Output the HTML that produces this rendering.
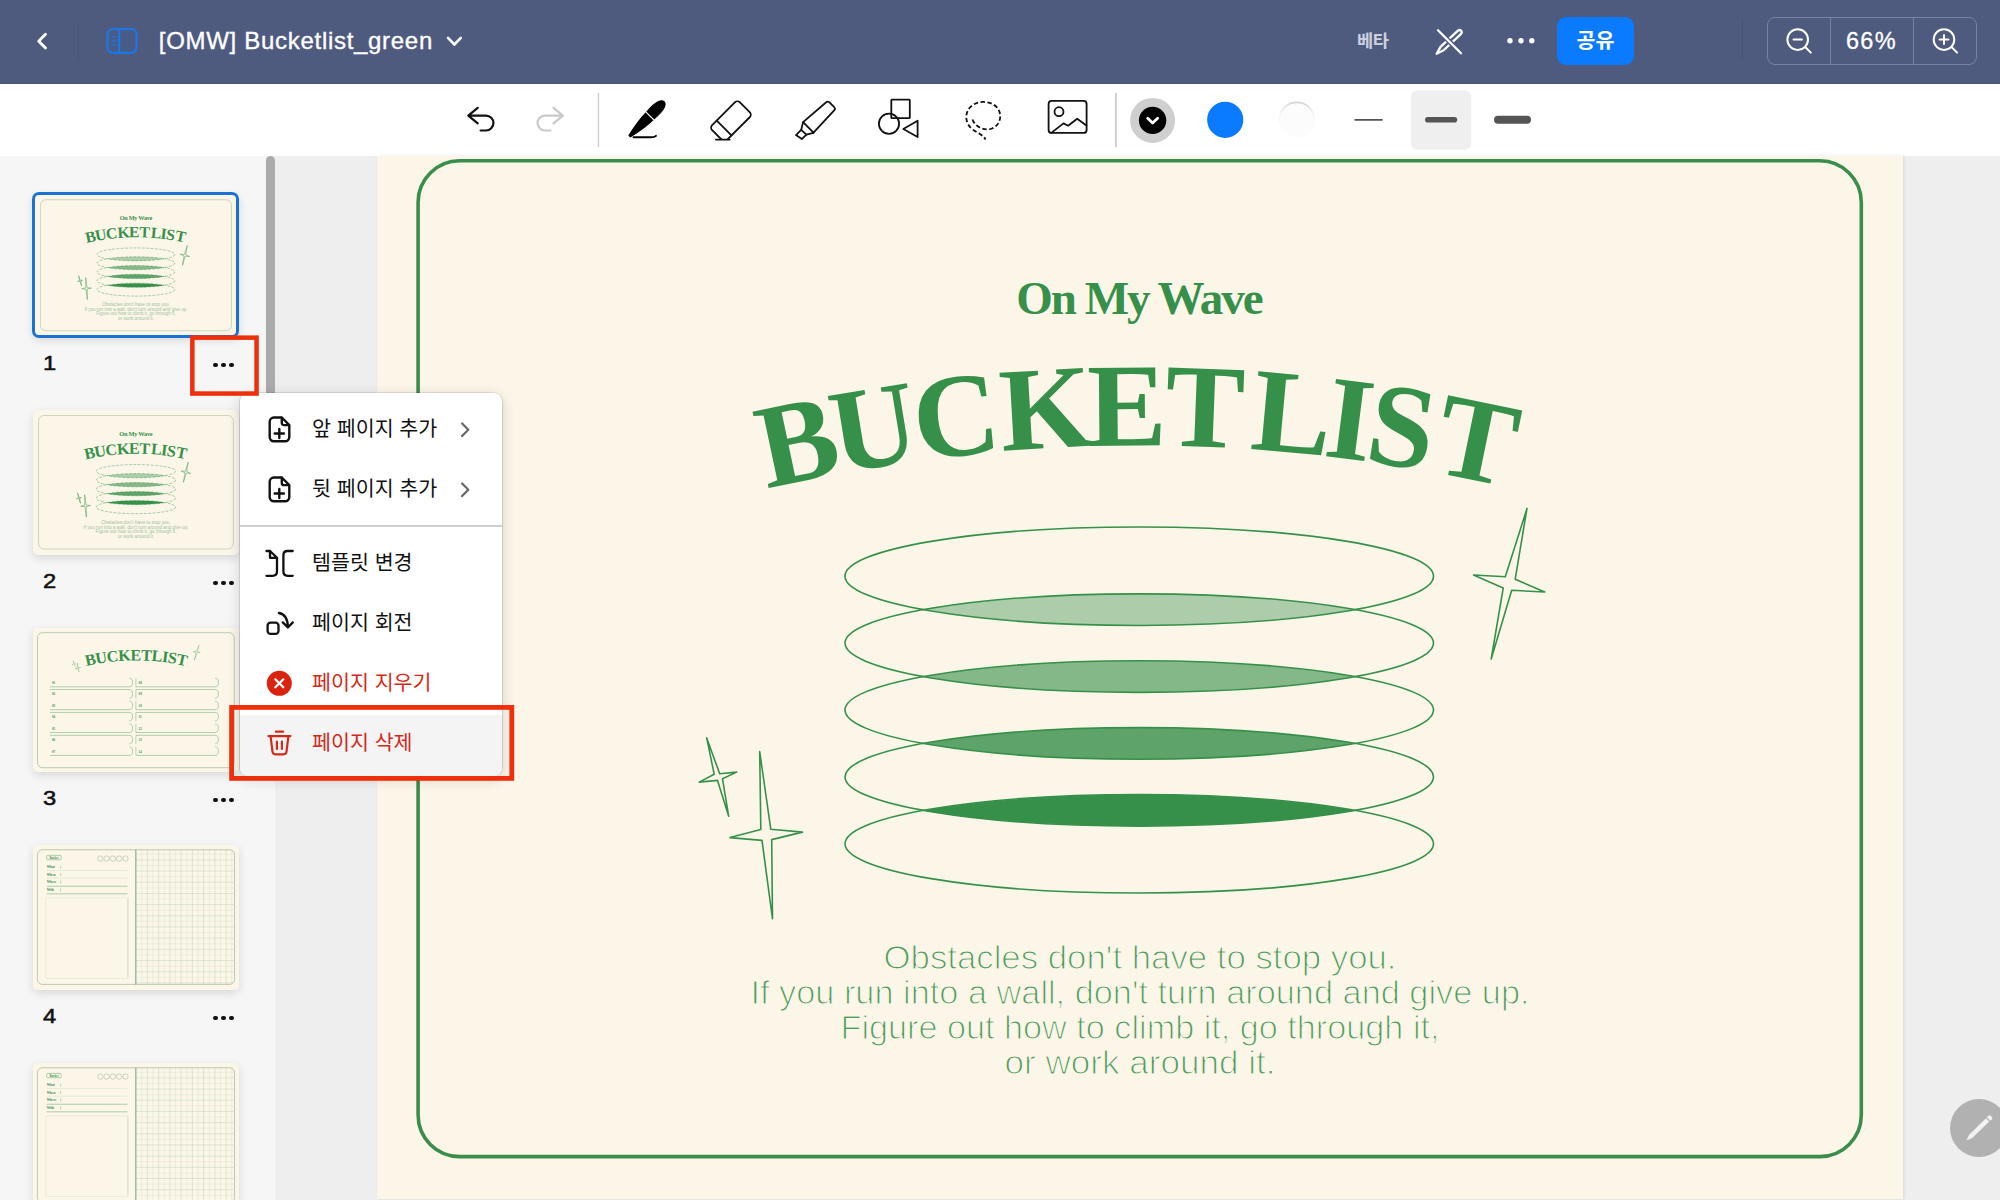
<!DOCTYPE html>
<html lang="ko">
<head>
<meta charset="utf-8">
<title>[OMW] Bucketlist_green</title>
<style>
*{box-sizing:border-box;margin:0;padding:0}
html,body{width:2000px;height:1200px;overflow:hidden;background:#eeeeee;font-family:"Liberation Sans","Noto Sans CJK KR",sans-serif;}
body{position:relative}
#topbar{position:absolute;left:0;top:0;width:2000px;height:83.7px;background:#4e5b7f;box-shadow:inset 0 -1.5px 0 #4a5878}
#toolbar{position:absolute;left:0;top:83.7px;width:2000px;height:72.3px;background:#fff;}
#sidebar{position:absolute;left:0;top:156px;width:266px;height:1044px;background:#f6f6f6;}
#scroll{position:absolute;left:266px;top:156px;width:9px;height:1044px;background:#f6f6f6;}
#scroll i{position:absolute;left:0;top:0;width:9px;height:245px;border-radius:5px 5px 0 0;background:#aaaaaa;}
#gap{position:absolute;left:275px;top:156px;width:102px;height:1044px;background:#eeeeee;}
#page{position:absolute;left:377px;top:156px;width:1526px;height:1042.6px;background:#fcf6e9;box-shadow:1px 0 3px rgba(0,0,0,.10);}
#rightgap{position:absolute;left:1903px;top:156px;width:97px;height:1044px;background:#eeeeee;z-index:-1}
.title{position:absolute;left:158.8px;top:26.3px;color:#fff;font-size:24px;line-height:30px;white-space:nowrap;letter-spacing:.7px;-webkit-text-stroke:.35px #fff;}
.beta{position:absolute;left:1357px;top:29.4px;color:#cdd1dc;font-size:17.6px;font-weight:bold;line-height:24px;white-space:nowrap;letter-spacing:-.4px}
.share{position:absolute;left:1557px;top:17px;width:77px;height:48px;border-radius:9px;background:#0a7aff;color:#fff;font-size:20.6px;font-weight:bold;line-height:48.6px;text-align:center;}
.zoomgrp{position:absolute;left:1767px;top:17px;width:210px;height:48px;border:1px solid #7383a6;border-radius:8px;}
.zoomgrp i{position:absolute;top:0;width:1px;height:46px;background:#7383a6}
.zoomtxt{position:absolute;left:1830.5px;top:26.2px;width:82px;text-align:center;color:#fff;font-size:23.5px;line-height:30px;letter-spacing:1.4px;-webkit-text-stroke:.3px #fff;}
svg{position:absolute;left:0;top:0;overflow:visible}
.thumb{position:absolute;left:32.7px;width:206px;height:144.6px;background:#fcf6e9;border-radius:5px;box-shadow:0 3px 10px rgba(0,0,0,.13);overflow:hidden}
.thumb svg{position:absolute;left:0;top:0;width:206px;height:144.6px}
.pnum{position:absolute;left:43.4px;transform:scaleX(1.13);transform-origin:0 0;font-size:21px;line-height:24px;color:#111;-webkit-text-stroke:.55px #111;}
.pdots{position:absolute;left:213px;width:22px;height:5px;}
.pdots i{position:absolute;top:0;width:4.3px;height:4.3px;border-radius:50%;background:#111}
#menu{position:absolute;left:239.5px;top:392.5px;width:262px;height:383.5px;background:#fff;border-radius:8px;box-shadow:0 0 0 .6px rgba(0,0,0,.18),0 3px 14px rgba(0,0,0,.16);overflow:hidden}
.mi{position:absolute;left:0;width:262px;height:60px;}
.mi span{position:absolute;left:72.6px;top:17.4px;font-size:20.6px;line-height:28px;color:#111;white-space:nowrap}
.mi.red span{color:#d3291a}
.mi.hl{background:#f4f4f5}
.mdiv{position:absolute;left:0;top:132.5px;width:262px;height:1.6px;background:#cfcfcf}
</style>
</head>
<body>
<div id="topbar"></div>
<div id="toolbar"></div>
<div id="sidebar"></div>
<div id="scroll"><i></i></div>
<div id="gap"></div>
<div id="rightgap"></div>
<div id="page"></div>
<div class="title">[OMW] Bucketlist_green</div>
<div class="beta">베타</div>
<div class="share">공유</div>
<div class="zoomgrp"><i style="left:61.6px"></i><i style="left:144.6px"></i></div>
<div class="zoomtxt">66%</div>
<div id="pageclip" style="position:absolute;left:377px;top:156px;width:1526px;height:1042.6px;overflow:hidden"><svg width="1526" height="1078" viewBox="0 0 1526 1078" style="left:0;top:-35.6px"><rect x="41.1" y="40.8" width="1443.2" height="995.8" rx="41.5" fill="none" stroke="#3b8d4c" stroke-width="3.6"/>
<text x="762" y="193.6" text-anchor="middle" font-family="'Liberation Serif',serif" font-weight="bold" font-size="47" letter-spacing="-2" fill="#36904a">On My Wave</text>
<path id="arc0" d="M207.6 423.5 A1624 1624 0 0 1 1318.4 423.5" fill="none"/>
<text font-family="'Liberation Serif',serif"  font-weight="bold" font-size="119" letter-spacing="-3" fill="#36904a" text-anchor="middle"><textPath href="#arc0" startOffset="50%"><tspan dx="-4 -4 -2 2 -4 0 9 -3 -2 5">BUCKETLIST</tspan></textPath></text>
<path d="M546.3 489.6 A294.25 49.25 0 0 1 978.2 489.6 A294.25 49.25 0 0 1 546.3 489.6Z" fill="#36904a" fill-opacity="0.4"/>
<path d="M546.3 556.6 A294.25 49.25 0 0 1 978.2 556.6 A294.25 49.25 0 0 1 546.3 556.6Z" fill="#36904a" fill-opacity="0.6"/>
<path d="M546.3 623.5 A294.25 49.25 0 0 1 978.2 623.5 A294.25 49.25 0 0 1 546.3 623.5Z" fill="#36904a" fill-opacity="0.8"/>
<path d="M546.3 690.4 A294.25 49.25 0 0 1 978.2 690.4 A294.25 49.25 0 0 1 546.3 690.4Z" fill="#36904a" fill-opacity="1.0"/>
<ellipse cx="762.25" cy="456.20" rx="294.25" ry="49.25" fill="none" stroke="#36904a" stroke-width="1.6"/>
<ellipse cx="762.25" cy="523.10" rx="294.25" ry="49.25" fill="none" stroke="#36904a" stroke-width="1.6"/>
<ellipse cx="762.25" cy="590.00" rx="294.25" ry="49.25" fill="none" stroke="#36904a" stroke-width="1.6"/>
<ellipse cx="762.25" cy="656.90" rx="294.25" ry="49.25" fill="none" stroke="#36904a" stroke-width="1.6"/>
<ellipse cx="762.25" cy="723.80" rx="294.25" ry="49.25" fill="none" stroke="#36904a" stroke-width="1.6"/>
<path d="M1150.0 388.4 L1138.2 459.2 L1167.7 472.0 L1134.7 470.3 L1114.2 539.0 L1126.2 468.1 L1096.5 455.0 L1128.3 456.8Z" fill="none" stroke="#36904a" stroke-width="1.6" stroke-linejoin="round"/>
<path d="M329.7 617.9 L342.7 653.8 L359.7 652.1 L345.5 658.8 L351.7 696.3 L340.5 660.4 L322.2 662.1 L337.2 654.3Z" fill="none" stroke="#36904a" stroke-width="1.6" stroke-linejoin="round"/>
<path d="M382.7 631.6 L393.8 709.3 L425.5 712.1 L394.7 719.6 L395.5 798.8 L385.0 720.4 L353.0 717.6 L383.8 709.6Z" fill="none" stroke="#36904a" stroke-width="1.6" stroke-linejoin="round"/>
<text x="763" y="849.1" text-anchor="middle" textLength="513" lengthAdjust="spacingAndGlyphs" font-family="'Liberation Sans',sans-serif" font-size="34" fill="#4c9a5c" stroke="#fcf6e9" stroke-width="1.15">Obstacles don't have to stop you.</text>
<text x="763" y="884.2" text-anchor="middle" textLength="779" lengthAdjust="spacingAndGlyphs" font-family="'Liberation Sans',sans-serif" font-size="34" fill="#4c9a5c" stroke="#fcf6e9" stroke-width="1.15">If you run into a wall, don't turn around and give up.</text>
<text x="763" y="919.3" text-anchor="middle" textLength="599" lengthAdjust="spacingAndGlyphs" font-family="'Liberation Sans',sans-serif" font-size="34" fill="#4c9a5c" stroke="#fcf6e9" stroke-width="1.15">Figure out how to climb it, go through it,</text>
<text x="763" y="954.0" text-anchor="middle" textLength="271" lengthAdjust="spacingAndGlyphs" font-family="'Liberation Sans',sans-serif" font-size="34" fill="#4c9a5c" stroke="#fcf6e9" stroke-width="1.15">or work around it.</text></svg></div>
<svg id="icons" width="2000" height="160" viewBox="0 0 2000 160" fill="none" stroke-linecap="round" stroke-linejoin="round">
<!-- topbar: back chevron -->
<path d="M45.5 34.3 L38.7 41.2 L45.5 48.1" stroke="#fff" stroke-width="2.8"/>
<rect x="78" y="24" width="1" height="36" fill="#44507180" stroke="none"/>
<!-- sidebar toggle icon -->
<rect x="107.5" y="29" width="29" height="23.8" rx="5.2" stroke="#1b78e6" stroke-width="2.2" fill="#1b78e614"/>
<path d="M119.2 29.4 V52.4" stroke="#1b78e6" stroke-width="2.1"/>
<path d="M112.2 36.6h3.4M112.2 40.8h3.4M112.2 44.8h3.4" stroke="#1b78e6" stroke-width="1.3"/>
<!-- title chevron -->
<path d="M448 37.9 L454.4 44.5 L460.8 37.9" stroke="#fff" stroke-width="2.6"/>
<!-- pen-cross icon -->
<g stroke="#fff" stroke-width="2.3">
<g transform="translate(1436.6,53.7) rotate(-43.1)"><path d="M0 0 L7.5 -2.3 L30.3 -2.3 Q33.6 -2.3 33.6 0 Q33.6 2.3 30.3 2.3 L7.5 2.3 Z" fill="#4e5b7f"/></g>
<path d="M1438 30.2 L1461 53.2" stroke="#4e5b7f" stroke-width="5"/>
<path d="M1438 30.2 L1461 53.2"/>
</g>
<!-- more dots -->
<g fill="#fff" stroke="none"><circle cx="1510" cy="40.8" r="2.7"/><circle cx="1521" cy="40.8" r="2.7"/><circle cx="1531.8" cy="40.8" r="2.7"/></g>
<rect x="1742" y="18" width="1" height="42" fill="#00000018" stroke="none"/>
<!-- zoom out -->
<g stroke="#fff" stroke-width="2">
<circle cx="1797.7" cy="39.6" r="10.3"/><path d="M1805.2 47 L1810.8 52.6"/><path d="M1793.5 39.6 h8.4"/>
<circle cx="1944" cy="39.6" r="10.3"/><path d="M1951.5 47 L1957.1 52.6"/><path d="M1939.5 39.6 h9 M1944 35.1 v9"/>
</g>
<!-- toolbar: undo / redo -->
<path d="M477.7 107.8 L468.3 115.6 L477.7 123.4 M468.6 115.6 H486 a7.45 7.45 0 0 1 0 14.9 H480.6" stroke="#111" stroke-width="2.2"/>
<path d="M553.5 107.8 L562.9 115.6 L553.5 123.4 M562.6 115.6 H545 a7.45 7.45 0 0 0 0 14.9 H550.4" stroke="#c9c9c9" stroke-width="2.2"/>
<rect x="597.7" y="93" width="1.5" height="54" fill="#cfcfcf" stroke="none"/>
<rect x="1115" y="93" width="1.8" height="54" fill="#cccccc" stroke="none"/>
<!-- pen -->
<g transform="translate(629.6,136.2) rotate(-45)">
<path d="M0 -1 C6 -2.4 17 -5 29 -5.1 C35 -5.6 42 -5.4 45 -4.2 C48 -3 48.8 -1.5 48.8 0 C48.8 1.5 48 3 45 4.2 C42 5.4 35 5.6 29 5.1 C17 5 6 2.4 0 1 Z" fill="#000" stroke="#000" stroke-width="1"/>
<path d="M28.7 -6.5 V6.5" stroke="#fff" stroke-width="1.1"/>
</g>
<path d="M633.5 137.3 H651 Q654.5 137.3 656 135.8" stroke="#000" stroke-width="1.9"/>
<!-- eraser -->
<clipPath id="erc"><rect x="700" y="90" width="60" height="50"/></clipPath>
<g clip-path="url(#erc)" stroke="#111" stroke-width="1.8">
<g transform="translate(724.1,128) rotate(-45)">
<rect x="-10" y="-10.5" width="39.3" height="21" rx="3.6"/>
<path d="M0 -10.4 V10.4"/>
</g></g>
<path d="M716 139.7 H729.6" stroke="#111" stroke-width="1.8"/>
<!-- highlighter -->
<g stroke="#111" stroke-width="1.8">
<path d="M803.1 122.1 L826.2 102.2 Q828 100.9 829.5 102.4 L834.2 107.1 Q835.6 108.7 834.4 110.2 L813.5 132.6 Z"/>
<path d="M803.1 122.1 L801.2 129.9 L806.4 134.6 L813.5 132.8"/>
<path d="M801.2 129.9 L796 135.1 L801.8 139.1 L806.4 134.6"/>
</g>
<!-- shapes -->
<g stroke="#111" stroke-width="1.8">
<rect x="891.3" y="99.6" width="18.5" height="18.6" rx=".6"/>
<circle cx="889" cy="123.8" r="10.1"/>
<path d="M917.6 120.8 V137 L903.3 129 Z"/>
</g>
<!-- lasso -->
<g stroke="#111" stroke-width="1.8" stroke-dasharray="4.4 2.5" stroke-linecap="butt">
<path d="M972.5 119.5 C975 127 985 131.5 992 128.5 C1001 125 1003 113 996 106.5 C989 100 975.5 100.5 969.5 108 C964 115 966 124 972 129 C977 133 983 134.5 985.5 139.5"/>
</g>
<!-- image -->
<g stroke="#111" stroke-width="1.8">
<rect x="1048.6" y="100.9" width="38" height="32" rx="3"/>
<circle cx="1059" cy="111.7" r="4.5"/>
<path d="M1051.6 132.6 L1063.5 123.4 L1068.1 125.7 L1077.2 118.8 L1086.4 125.4"/>
</g>
<!-- color swatches -->
<circle cx="1152.6" cy="120.4" r="22.5" fill="#cfcfcf" stroke="none"/>
<circle cx="1152.6" cy="120.4" r="13.7" fill="#000" stroke="none"/>
<path d="M1147.7 118.3 L1152.6 123.1 L1157.6 118.3" stroke="#fff" stroke-width="2.8"/>
<circle cx="1225.2" cy="119.8" r="18.1" fill="#0a7aff" stroke="none"/>
<defs><linearGradient id="wg" x1="0" y1="0" x2="0" y2="1"><stop offset="0" stop-color="#d2d2d2"/><stop offset=".35" stop-color="#f3f3f3"/><stop offset="1" stop-color="#ffffff"/></linearGradient></defs>
<circle cx="1296.9" cy="119.4" r="18" fill="url(#wg)" stroke="none"/>
<circle cx="1296.9" cy="120.4" r="17.2" fill="#fcfcfc" stroke="none"/>
<!-- line widths -->
<rect x="1411" y="90.2" width="60.2" height="59.6" rx="6.5" fill="#efefef" stroke="none"/>
<path d="M1355.2 119.8 H1382" stroke="#555" stroke-width="1.8"/>
<path d="M1427.8 119.8 H1454.4" stroke="#555" stroke-width="5.6"/>
<path d="M1498 119.8 H1527" stroke="#555" stroke-width="8"/>
</svg>

<div class="thumb" style="top:192.8px"><svg viewBox="-15 -10.6 1556 1099.2" preserveAspectRatio="none"><rect x="41.1" y="40.8" width="1443.2" height="995.8" rx="41.5" fill="none" stroke="#a0bb9e" stroke-width="4.2"/>
<text x="762" y="193.6" text-anchor="middle" font-family="'Liberation Serif',serif" font-weight="bold" font-size="47" letter-spacing="-2" fill="#36904a">On My Wave</text>
<path id="arc1" d="M207.6 423.5 A1624 1624 0 0 1 1318.4 423.5" fill="none"/>
<text font-family="'Liberation Serif',serif"  font-weight="bold" font-size="119" letter-spacing="-3" fill="#36904a" text-anchor="middle"><textPath href="#arc1" startOffset="50%"><tspan dx="-4 -4 -2 2 -4 0 9 -3 -2 5">BUCKETLIST</tspan></textPath></text>
<path d="M546.3 489.6 A294.25 49.25 0 0 1 978.2 489.6 A294.25 49.25 0 0 1 546.3 489.6Z" fill="#36904a" fill-opacity="0.4"/>
<path d="M546.3 556.6 A294.25 49.25 0 0 1 978.2 556.6 A294.25 49.25 0 0 1 546.3 556.6Z" fill="#36904a" fill-opacity="0.6"/>
<path d="M546.3 623.5 A294.25 49.25 0 0 1 978.2 623.5 A294.25 49.25 0 0 1 546.3 623.5Z" fill="#36904a" fill-opacity="0.8"/>
<path d="M546.3 690.4 A294.25 49.25 0 0 1 978.2 690.4 A294.25 49.25 0 0 1 546.3 690.4Z" fill="#36904a" fill-opacity="1.0"/>
<ellipse cx="762.25" cy="456.20" rx="294.25" ry="49.25" fill="none" stroke="#36904a" stroke-width="3.2" stroke-dasharray="22 10"/>
<ellipse cx="762.25" cy="523.10" rx="294.25" ry="49.25" fill="none" stroke="#36904a" stroke-width="3.2" stroke-dasharray="22 10"/>
<ellipse cx="762.25" cy="590.00" rx="294.25" ry="49.25" fill="none" stroke="#36904a" stroke-width="3.2" stroke-dasharray="22 10"/>
<ellipse cx="762.25" cy="656.90" rx="294.25" ry="49.25" fill="none" stroke="#36904a" stroke-width="3.2" stroke-dasharray="22 10"/>
<ellipse cx="762.25" cy="723.80" rx="294.25" ry="49.25" fill="none" stroke="#36904a" stroke-width="3.2" stroke-dasharray="22 10"/>
<path d="M1150.0 388.4 L1138.2 459.2 L1167.7 472.0 L1134.7 470.3 L1114.2 539.0 L1126.2 468.1 L1096.5 455.0 L1128.3 456.8Z" fill="none" stroke="#36904a" stroke-width="3.5" stroke-linejoin="round"/>
<path d="M329.7 617.9 L342.7 653.8 L359.7 652.1 L345.5 658.8 L351.7 696.3 L340.5 660.4 L322.2 662.1 L337.2 654.3Z" fill="none" stroke="#36904a" stroke-width="3.5" stroke-linejoin="round"/>
<path d="M382.7 631.6 L393.8 709.3 L425.5 712.1 L394.7 719.6 L395.5 798.8 L385.0 720.4 L353.0 717.6 L383.8 709.6Z" fill="none" stroke="#36904a" stroke-width="3.5" stroke-linejoin="round"/>
<text x="763" y="849.1" text-anchor="middle" textLength="513" lengthAdjust="spacingAndGlyphs" font-family="'Liberation Sans',sans-serif" font-size="34" fill="#9dc2a0" stroke="#fcf6e9" stroke-width="0">Obstacles don't have to stop you.</text>
<text x="763" y="884.2" text-anchor="middle" textLength="779" lengthAdjust="spacingAndGlyphs" font-family="'Liberation Sans',sans-serif" font-size="34" fill="#9dc2a0" stroke="#fcf6e9" stroke-width="0">If you run into a wall, don't turn around and give up.</text>
<text x="763" y="919.3" text-anchor="middle" textLength="599" lengthAdjust="spacingAndGlyphs" font-family="'Liberation Sans',sans-serif" font-size="34" fill="#9dc2a0" stroke="#fcf6e9" stroke-width="0">Figure out how to climb it, go through it,</text>
<text x="763" y="954.0" text-anchor="middle" textLength="271" lengthAdjust="spacingAndGlyphs" font-family="'Liberation Sans',sans-serif" font-size="34" fill="#9dc2a0" stroke="#fcf6e9" stroke-width="0">or work around it.</text></svg></div><div style="position:absolute;left:32px;top:191.9px;width:207px;height:145.8px;border:3px solid #1a73d4;border-radius:7px"></div>
<div class="pnum" style="top:351.3px">1</div><div class="pdots" style="top:363.0px"><i style="left:0.45px"></i><i style="left:8.45px"></i><i style="left:16.45px"></i></div>
<div class="thumb" style="top:410.3px"><svg viewBox="0 0 1526 1078" preserveAspectRatio="none"><rect x="41.1" y="40.8" width="1443.2" height="995.8" rx="41.5" fill="none" stroke="#a0bb9e" stroke-width="4.2"/>
<text x="762" y="193.6" text-anchor="middle" font-family="'Liberation Serif',serif" font-weight="bold" font-size="47" letter-spacing="-2" fill="#36904a">On My Wave</text>
<path id="arc2" d="M207.6 423.5 A1624 1624 0 0 1 1318.4 423.5" fill="none"/>
<text font-family="'Liberation Serif',serif"  font-weight="bold" font-size="119" letter-spacing="-3" fill="#36904a" text-anchor="middle"><textPath href="#arc2" startOffset="50%"><tspan dx="-4 -4 -2 2 -4 0 9 -3 -2 5">BUCKETLIST</tspan></textPath></text>
<path d="M546.3 489.6 A294.25 49.25 0 0 1 978.2 489.6 A294.25 49.25 0 0 1 546.3 489.6Z" fill="#36904a" fill-opacity="0.4"/>
<path d="M546.3 556.6 A294.25 49.25 0 0 1 978.2 556.6 A294.25 49.25 0 0 1 546.3 556.6Z" fill="#36904a" fill-opacity="0.6"/>
<path d="M546.3 623.5 A294.25 49.25 0 0 1 978.2 623.5 A294.25 49.25 0 0 1 546.3 623.5Z" fill="#36904a" fill-opacity="0.8"/>
<path d="M546.3 690.4 A294.25 49.25 0 0 1 978.2 690.4 A294.25 49.25 0 0 1 546.3 690.4Z" fill="#36904a" fill-opacity="1.0"/>
<ellipse cx="762.25" cy="456.20" rx="294.25" ry="49.25" fill="none" stroke="#36904a" stroke-width="3.2" stroke-dasharray="22 10"/>
<ellipse cx="762.25" cy="523.10" rx="294.25" ry="49.25" fill="none" stroke="#36904a" stroke-width="3.2" stroke-dasharray="22 10"/>
<ellipse cx="762.25" cy="590.00" rx="294.25" ry="49.25" fill="none" stroke="#36904a" stroke-width="3.2" stroke-dasharray="22 10"/>
<ellipse cx="762.25" cy="656.90" rx="294.25" ry="49.25" fill="none" stroke="#36904a" stroke-width="3.2" stroke-dasharray="22 10"/>
<ellipse cx="762.25" cy="723.80" rx="294.25" ry="49.25" fill="none" stroke="#36904a" stroke-width="3.2" stroke-dasharray="22 10"/>
<path d="M1150.0 388.4 L1138.2 459.2 L1167.7 472.0 L1134.7 470.3 L1114.2 539.0 L1126.2 468.1 L1096.5 455.0 L1128.3 456.8Z" fill="none" stroke="#36904a" stroke-width="3.5" stroke-linejoin="round"/>
<path d="M329.7 617.9 L342.7 653.8 L359.7 652.1 L345.5 658.8 L351.7 696.3 L340.5 660.4 L322.2 662.1 L337.2 654.3Z" fill="none" stroke="#36904a" stroke-width="3.5" stroke-linejoin="round"/>
<path d="M382.7 631.6 L393.8 709.3 L425.5 712.1 L394.7 719.6 L395.5 798.8 L385.0 720.4 L353.0 717.6 L383.8 709.6Z" fill="none" stroke="#36904a" stroke-width="3.5" stroke-linejoin="round"/>
<text x="763" y="849.1" text-anchor="middle" textLength="513" lengthAdjust="spacingAndGlyphs" font-family="'Liberation Sans',sans-serif" font-size="34" fill="#9dc2a0" stroke="#fcf6e9" stroke-width="0">Obstacles don't have to stop you.</text>
<text x="763" y="884.2" text-anchor="middle" textLength="779" lengthAdjust="spacingAndGlyphs" font-family="'Liberation Sans',sans-serif" font-size="34" fill="#9dc2a0" stroke="#fcf6e9" stroke-width="0">If you run into a wall, don't turn around and give up.</text>
<text x="763" y="919.3" text-anchor="middle" textLength="599" lengthAdjust="spacingAndGlyphs" font-family="'Liberation Sans',sans-serif" font-size="34" fill="#9dc2a0" stroke="#fcf6e9" stroke-width="0">Figure out how to climb it, go through it,</text>
<text x="763" y="954.0" text-anchor="middle" textLength="271" lengthAdjust="spacingAndGlyphs" font-family="'Liberation Sans',sans-serif" font-size="34" fill="#9dc2a0" stroke="#fcf6e9" stroke-width="0">or work around it.</text></svg></div>
<div class="pnum" style="top:568.8px">2</div><div class="pdots" style="top:580.5px"><i style="left:0.45px"></i><i style="left:8.45px"></i><i style="left:16.45px"></i></div>
<div class="thumb" style="top:627.8px"><svg viewBox="0 0 205 144.8" preserveAspectRatio="none"><rect x="4.5" y="4.7" width="195.8" height="135.2" rx="5" fill="none" stroke="#8fae8f" stroke-width=".6"/>
<g transform="scale(0.13434)"><path id="arc3" d="M207.6 339.5 A1624 1624 0 0 1 1318.4 339.5" fill="none"/><text font-family="'Liberation Serif',serif" font-weight="bold" font-size="119" letter-spacing="-3" fill="#36904a" text-anchor="middle"><textPath href="#arc3" startOffset="50%">BUCKETLIST</textPath></text></g>
<path d="M165.20 17.40 L163.60 23.60 L166.40 24.60 L163.30 24.90 L160.60 32.00 L162.30 24.70 L159.40 23.70 L162.60 23.40Z" fill="none" stroke="#36904a" stroke-opacity=".75" stroke-width="0.4" stroke-linejoin="round"/>
<path d="M44.20 35.20 L44.90 39.60 L47.20 39.40 L45.10 40.40 L46.00 44.00 L44.20 40.60 L41.80 41.00 L43.90 39.90Z" fill="none" stroke="#36904a" stroke-opacity=".75" stroke-width="0.38" stroke-linejoin="round"/>
<path d="M40.00 32.60 L41.00 35.30 L42.60 35.00 L41.30 35.90 L42.20 38.60 L40.60 36.10 L38.80 36.60 L40.40 35.60Z" fill="none" stroke="#36904a" stroke-opacity=".75" stroke-width="0.3" stroke-linejoin="round"/>
<path d="M16.9 58.90 H95.8 a3.3 4.3 0 0 0 0 -8.6" fill="none" stroke="#36904a" stroke-opacity=".7" stroke-width=".55"/>
<text x="18.799999999999997" y="56.00" font-family="'Liberation Serif',serif" font-weight="bold" font-size="3.3" fill="#36904a">01</text>
<path d="M16.9 61.65 H95.8 a3.3 4.3 0 0 1 0 8.6" fill="none" stroke="#36904a" stroke-opacity=".7" stroke-width=".55"/>
<text x="18.799999999999997" y="67.45" font-family="'Liberation Serif',serif" font-weight="bold" font-size="3.3" fill="#36904a">02</text>
<path d="M16.9 81.80 H95.8 a3.3 4.3 0 0 0 0 -8.6" fill="none" stroke="#36904a" stroke-opacity=".7" stroke-width=".55"/>
<text x="18.799999999999997" y="78.90" font-family="'Liberation Serif',serif" font-weight="bold" font-size="3.3" fill="#36904a">03</text>
<path d="M16.9 84.55 H95.8 a3.3 4.3 0 0 1 0 8.6" fill="none" stroke="#36904a" stroke-opacity=".7" stroke-width=".55"/>
<text x="18.799999999999997" y="90.35" font-family="'Liberation Serif',serif" font-weight="bold" font-size="3.3" fill="#36904a">04</text>
<path d="M16.9 104.70 H95.8 a3.3 4.3 0 0 0 0 -8.6" fill="none" stroke="#36904a" stroke-opacity=".7" stroke-width=".55"/>
<text x="18.799999999999997" y="101.80" font-family="'Liberation Serif',serif" font-weight="bold" font-size="3.3" fill="#36904a">05</text>
<path d="M16.9 107.45 H95.8 a3.3 4.3 0 0 1 0 8.6" fill="none" stroke="#36904a" stroke-opacity=".7" stroke-width=".55"/>
<text x="18.799999999999997" y="113.25" font-family="'Liberation Serif',serif" font-weight="bold" font-size="3.3" fill="#36904a">06</text>
<path d="M16.9 127.60 H95.8 a3.3 4.3 0 0 0 0 -8.6" fill="none" stroke="#36904a" stroke-opacity=".7" stroke-width=".55"/>
<text x="18.799999999999997" y="124.70" font-family="'Liberation Serif',serif" font-weight="bold" font-size="3.3" fill="#36904a">07</text>
<path d="M102.4 58.90 H181.2 a3.3 4.3 0 0 0 0 -8.6" fill="none" stroke="#36904a" stroke-opacity=".7" stroke-width=".55"/>
<text x="105.10000000000001" y="56.00" font-family="'Liberation Serif',serif" font-weight="bold" font-size="3.3" fill="#36904a">08</text>
<path d="M102.4 50.30 V58.90" stroke="#36904a" stroke-opacity=".7" stroke-width=".5"/>
<path d="M102.4 61.65 H181.2 a3.3 4.3 0 0 1 0 8.6" fill="none" stroke="#36904a" stroke-opacity=".7" stroke-width=".55"/>
<text x="105.10000000000001" y="67.45" font-family="'Liberation Serif',serif" font-weight="bold" font-size="3.3" fill="#36904a">09</text>
<path d="M102.4 61.75 V70.35" stroke="#36904a" stroke-opacity=".7" stroke-width=".5"/>
<path d="M102.4 81.80 H181.2 a3.3 4.3 0 0 0 0 -8.6" fill="none" stroke="#36904a" stroke-opacity=".7" stroke-width=".55"/>
<text x="105.10000000000001" y="78.90" font-family="'Liberation Serif',serif" font-weight="bold" font-size="3.3" fill="#36904a">10</text>
<path d="M102.4 73.20 V81.80" stroke="#36904a" stroke-opacity=".7" stroke-width=".5"/>
<path d="M102.4 84.55 H181.2 a3.3 4.3 0 0 1 0 8.6" fill="none" stroke="#36904a" stroke-opacity=".7" stroke-width=".55"/>
<text x="105.10000000000001" y="90.35" font-family="'Liberation Serif',serif" font-weight="bold" font-size="3.3" fill="#36904a">11</text>
<path d="M102.4 84.65 V93.25" stroke="#36904a" stroke-opacity=".7" stroke-width=".5"/>
<path d="M102.4 104.70 H181.2 a3.3 4.3 0 0 0 0 -8.6" fill="none" stroke="#36904a" stroke-opacity=".7" stroke-width=".55"/>
<text x="105.10000000000001" y="101.80" font-family="'Liberation Serif',serif" font-weight="bold" font-size="3.3" fill="#36904a">12</text>
<path d="M102.4 96.10 V104.70" stroke="#36904a" stroke-opacity=".7" stroke-width=".5"/>
<path d="M102.4 107.45 H181.2 a3.3 4.3 0 0 1 0 8.6" fill="none" stroke="#36904a" stroke-opacity=".7" stroke-width=".55"/>
<text x="105.10000000000001" y="113.25" font-family="'Liberation Serif',serif" font-weight="bold" font-size="3.3" fill="#36904a">13</text>
<path d="M102.4 107.55 V116.15" stroke="#36904a" stroke-opacity=".7" stroke-width=".5"/>
<path d="M102.4 127.60 H181.2 a3.3 4.3 0 0 0 0 -8.6" fill="none" stroke="#36904a" stroke-opacity=".7" stroke-width=".55"/>
<text x="105.10000000000001" y="124.70" font-family="'Liberation Serif',serif" font-weight="bold" font-size="3.3" fill="#36904a">14</text>
<path d="M102.4 119.00 V127.60" stroke="#36904a" stroke-opacity=".7" stroke-width=".5"/></svg></div>
<div class="pnum" style="top:786.3px">3</div><div class="pdots" style="top:798.0px"><i style="left:0.45px"></i><i style="left:8.45px"></i><i style="left:16.45px"></i></div>
<div class="thumb" style="top:845.3px"><svg viewBox="0 0 205 144.8" preserveAspectRatio="none"><clipPath id="gc845"><rect x="4.4" y="4.8" width="196.2" height="134.8" rx="5"/></clipPath>
<g clip-path="url(#gc845)"><path d="M108.20 4.9 V139.5 M119.40 4.9 V139.5 M130.60 4.9 V139.5 M141.80 4.9 V139.5 M153.00 4.9 V139.5 M164.20 4.9 V139.5 M175.40 4.9 V139.5 M186.60 4.9 V139.5 M197.80 4.9 V139.5 M102.6 9.30 H200.4 M102.6 20.50 H200.4 M102.6 31.70 H200.4 M102.6 42.90 H200.4 M102.6 54.10 H200.4 M102.6 65.30 H200.4 M102.6 76.50 H200.4 M102.6 87.70 H200.4 M102.6 98.90 H200.4 M102.6 110.10 H200.4 M102.6 121.30 H200.4 M102.6 132.50 H200.4" stroke="#d3e0cc" stroke-width=".4" fill="none"/><path d="M102.60 4.9 V139.5 M113.80 4.9 V139.5 M125.00 4.9 V139.5 M136.20 4.9 V139.5 M147.40 4.9 V139.5 M158.60 4.9 V139.5 M169.80 4.9 V139.5 M181.00 4.9 V139.5 M192.20 4.9 V139.5 M102.6 14.90 H200.4 M102.6 26.10 H200.4 M102.6 37.30 H200.4 M102.6 48.50 H200.4 M102.6 59.70 H200.4 M102.6 70.90 H200.4 M102.6 82.10 H200.4 M102.6 93.30 H200.4 M102.6 104.50 H200.4 M102.6 115.70 H200.4 M102.6 126.90 H200.4 M102.6 138.10 H200.4" stroke="#bfd2ba" stroke-width=".5" fill="none"/></g>
<rect x="4.4" y="4.8" width="196.2" height="134.8" rx="5" fill="none" stroke="#8fa88c" stroke-width=".6"/>
<path d="M102.3 4.8 V139.6" stroke="#4f8f5c" stroke-width=".7"/>
<rect x="13.6" y="10.4" width="14.4" height="4.4" rx="1" fill="none" stroke="#36904a" stroke-width=".4"/>
<text x="20.8" y="13.8" text-anchor="middle" font-family="'Liberation Serif',serif" font-weight="bold" font-size="3" fill="#36904a">Bucket</text>
<circle cx="67" cy="13.6" r="2.7" fill="none" stroke="#7d9c80" stroke-width=".4"/>
<circle cx="73.3" cy="13.6" r="2.7" fill="none" stroke="#7d9c80" stroke-width=".4"/>
<circle cx="79.5" cy="13.6" r="2.7" fill="none" stroke="#7d9c80" stroke-width=".4"/>
<circle cx="85.7" cy="13.6" r="2.7" fill="none" stroke="#7d9c80" stroke-width=".4"/>
<circle cx="92" cy="13.6" r="2.7" fill="none" stroke="#7d9c80" stroke-width=".4"/>
<text x="13.6" y="23.3" font-family="'Liberation Serif',serif" font-weight="bold" font-size="3.4" fill="#36904a">What</text>
<path d="M27.5 20.7 v2.8" stroke="#36904a" stroke-width=".35"/>
<text x="13.6" y="30.8" font-family="'Liberation Serif',serif" font-weight="bold" font-size="3.4" fill="#36904a">When</text>
<path d="M27.5 28.2 v2.8" stroke="#36904a" stroke-width=".35"/>
<text x="13.6" y="38.4" font-family="'Liberation Serif',serif" font-weight="bold" font-size="3.4" fill="#36904a">Where</text>
<path d="M27.5 35.8 v2.8" stroke="#36904a" stroke-width=".35"/>
<text x="13.6" y="46.1" font-family="'Liberation Serif',serif" font-weight="bold" font-size="3.4" fill="#36904a">With</text>
<path d="M27.5 43.5 v2.8" stroke="#36904a" stroke-width=".35"/>
<path d="M13.6 25.6 H94 M13.6 33.2 H94" stroke="#36904a" stroke-opacity=".22" stroke-width=".5"/>
<path d="M13.6 41.3 H94 M13.6 48.9 H94" stroke="#36904a" stroke-opacity=".75" stroke-width=".55"/>
<rect x="12.9" y="53" width="81.6" height="80.8" fill="none" stroke="#36904a" stroke-opacity=".18" stroke-width=".5"/>
<path d="M94.5 54 V133" stroke="#36904a" stroke-opacity=".35" stroke-width=".5"/></svg></div>
<div class="pnum" style="top:1003.8px">4</div><div class="pdots" style="top:1015.5px"><i style="left:0.45px"></i><i style="left:8.45px"></i><i style="left:16.45px"></i></div>
<div class="thumb" style="top:1062.8px"><svg viewBox="0 0 205 144.8" preserveAspectRatio="none"><clipPath id="gc1062"><rect x="4.4" y="4.8" width="196.2" height="134.8" rx="5"/></clipPath>
<g clip-path="url(#gc1062)"><path d="M108.20 4.9 V139.5 M119.40 4.9 V139.5 M130.60 4.9 V139.5 M141.80 4.9 V139.5 M153.00 4.9 V139.5 M164.20 4.9 V139.5 M175.40 4.9 V139.5 M186.60 4.9 V139.5 M197.80 4.9 V139.5 M102.6 9.30 H200.4 M102.6 20.50 H200.4 M102.6 31.70 H200.4 M102.6 42.90 H200.4 M102.6 54.10 H200.4 M102.6 65.30 H200.4 M102.6 76.50 H200.4 M102.6 87.70 H200.4 M102.6 98.90 H200.4 M102.6 110.10 H200.4 M102.6 121.30 H200.4 M102.6 132.50 H200.4" stroke="#d3e0cc" stroke-width=".4" fill="none"/><path d="M102.60 4.9 V139.5 M113.80 4.9 V139.5 M125.00 4.9 V139.5 M136.20 4.9 V139.5 M147.40 4.9 V139.5 M158.60 4.9 V139.5 M169.80 4.9 V139.5 M181.00 4.9 V139.5 M192.20 4.9 V139.5 M102.6 14.90 H200.4 M102.6 26.10 H200.4 M102.6 37.30 H200.4 M102.6 48.50 H200.4 M102.6 59.70 H200.4 M102.6 70.90 H200.4 M102.6 82.10 H200.4 M102.6 93.30 H200.4 M102.6 104.50 H200.4 M102.6 115.70 H200.4 M102.6 126.90 H200.4 M102.6 138.10 H200.4" stroke="#bfd2ba" stroke-width=".5" fill="none"/></g>
<rect x="4.4" y="4.8" width="196.2" height="134.8" rx="5" fill="none" stroke="#8fa88c" stroke-width=".6"/>
<path d="M102.3 4.8 V139.6" stroke="#4f8f5c" stroke-width=".7"/>
<rect x="13.6" y="10.4" width="14.4" height="4.4" rx="1" fill="none" stroke="#36904a" stroke-width=".4"/>
<text x="20.8" y="13.8" text-anchor="middle" font-family="'Liberation Serif',serif" font-weight="bold" font-size="3" fill="#36904a">Bucket</text>
<circle cx="67" cy="13.6" r="2.7" fill="none" stroke="#7d9c80" stroke-width=".4"/>
<circle cx="73.3" cy="13.6" r="2.7" fill="none" stroke="#7d9c80" stroke-width=".4"/>
<circle cx="79.5" cy="13.6" r="2.7" fill="none" stroke="#7d9c80" stroke-width=".4"/>
<circle cx="85.7" cy="13.6" r="2.7" fill="none" stroke="#7d9c80" stroke-width=".4"/>
<circle cx="92" cy="13.6" r="2.7" fill="none" stroke="#7d9c80" stroke-width=".4"/>
<text x="13.6" y="23.3" font-family="'Liberation Serif',serif" font-weight="bold" font-size="3.4" fill="#36904a">What</text>
<path d="M27.5 20.7 v2.8" stroke="#36904a" stroke-width=".35"/>
<text x="13.6" y="30.8" font-family="'Liberation Serif',serif" font-weight="bold" font-size="3.4" fill="#36904a">When</text>
<path d="M27.5 28.2 v2.8" stroke="#36904a" stroke-width=".35"/>
<text x="13.6" y="38.4" font-family="'Liberation Serif',serif" font-weight="bold" font-size="3.4" fill="#36904a">Where</text>
<path d="M27.5 35.8 v2.8" stroke="#36904a" stroke-width=".35"/>
<text x="13.6" y="46.1" font-family="'Liberation Serif',serif" font-weight="bold" font-size="3.4" fill="#36904a">With</text>
<path d="M27.5 43.5 v2.8" stroke="#36904a" stroke-width=".35"/>
<path d="M13.6 25.6 H94 M13.6 33.2 H94" stroke="#36904a" stroke-opacity=".22" stroke-width=".5"/>
<path d="M13.6 41.3 H94 M13.6 48.9 H94" stroke="#36904a" stroke-opacity=".75" stroke-width=".55"/>
<rect x="12.9" y="53" width="81.6" height="80.8" fill="none" stroke="#36904a" stroke-opacity=".18" stroke-width=".5"/>
<path d="M94.5 54 V133" stroke="#36904a" stroke-opacity=".35" stroke-width=".5"/></svg></div>
<div id="menu">
<div class="mi" style="top:5.5px"><span>앞 페이지 추가</span></div>
<div class="mi" style="top:65.5px"><span>뒷 페이지 추가</span></div>
<div class="mdiv"></div>
<div class="mi" style="top:139.2px"><span>템플릿 변경</span></div>
<div class="mi" style="top:199.2px"><span>페이지 회전</span></div>
<div class="mi red" style="top:259.2px"><span>페이지 지우기</span></div>
<div class="mi hl" style="top:322.6px;height:62px"></div><div class="mi red" style="top:319.2px"><span>페이지 삭제</span></div>
<svg width="262" height="383.5" viewBox="239.5 392.5 262 383.5" fill="none" stroke-linecap="round" stroke-linejoin="round">
<g stroke="#111" stroke-width="2.4">
<path id="fileplus" d="M281.3 417 H273.4 a4.2 4.2 0 0 0 -4.2 4.2 V436.6 a4.2 4.2 0 0 0 4.2 4.2 H284.6 a4.2 4.2 0 0 0 4.2 -4.2 V424.6 L281.3 417 V422.4 a2.2 2.2 0 0 0 2.2 2.2 H288.8 M274.2 433 h9.2 M278.8 428.4 v9.2"/>
<path d="M281.3 477 H273.4 a4.2 4.2 0 0 0 -4.2 4.2 V496.6 a4.2 4.2 0 0 0 4.2 4.2 H284.6 a4.2 4.2 0 0 0 4.2 -4.2 V484.6 L281.3 477 V482.4 a2.2 2.2 0 0 0 2.2 2.2 H288.8 M274.2 493 h9.2 M278.8 488.4 v9.2"/>
<!-- template -->
<path d="M266 550.5 H269.5 L276.5 557.3 V571 Q276.5 575.3 272 575.3 H266 M269.5 550.5 V557.3 H276.5" stroke-width="2.3"/>
<path d="M292.2 550.5 H287 Q282.9 550.5 282.9 554.7 V571.1 Q282.9 575.3 287 575.3 H292.2" stroke-width="2.3"/>
<!-- rotate -->
<rect x="267.1" y="622.1" width="10.9" height="11.3" rx="3" stroke-width="2.3"/>
<path d="M278.4 612.5 Q286.9 613.8 287.4 626.2 M282.3 621.9 L287.4 627 L292.3 621.9" stroke-width="2.3"/>
</g>
<g stroke="#666" stroke-width="2.2"><path d="M461.6 423 L467.8 429.3 L461.6 435.6"/><path d="M461.6 483 L467.8 489.3 L461.6 495.6"/></g>
<circle cx="278.8" cy="682.8" r="12.5" fill="#d9230f"/>
<path d="M274.8 678.8 L282.8 686.8 M282.8 678.8 L274.8 686.8" stroke="#fff" stroke-width="2.2"/>
<g stroke="#d3291a" stroke-width="2.2">
<path d="M268 735.6 H290 M275.4 731.2 H282.6"/>
<path d="M270.2 736.6 L272 751.2 Q272.3 753.8 275 753.8 H283 Q285.7 753.8 286 751.2 L287.8 736.6"/>
<path d="M276.4 741 V748.4 M281.4 741 V748.4"/>
</g>
</svg>
</div>

<svg width="2000" height="1200" viewBox="0 0 2000 1200" fill="none" style="pointer-events:none">
<rect x="192.35" y="337.65" width="64.2" height="55.9" stroke="#ee2f0c" stroke-width="4.5"/>
<rect x="231.6" y="707.4" width="280.2" height="71" stroke="#ee2f0c" stroke-width="4.8"/>
<circle cx="1979" cy="1128" r="29" fill="#b1b1b1"/>
<g transform="translate(1966.4,1140.6) rotate(-44.2)" fill="#f2f2f2">
<path d="M0 0 L6 -2.3 H29.6 V2.3 H6 Z"/>
<path d="M30.9 -2.5 H33 Q34.6 -2.5 34.6 -1.2 V1.2 Q34.6 2.5 33 2.5 H30.9 Z"/>
</g>
</svg>

</body>
</html>
